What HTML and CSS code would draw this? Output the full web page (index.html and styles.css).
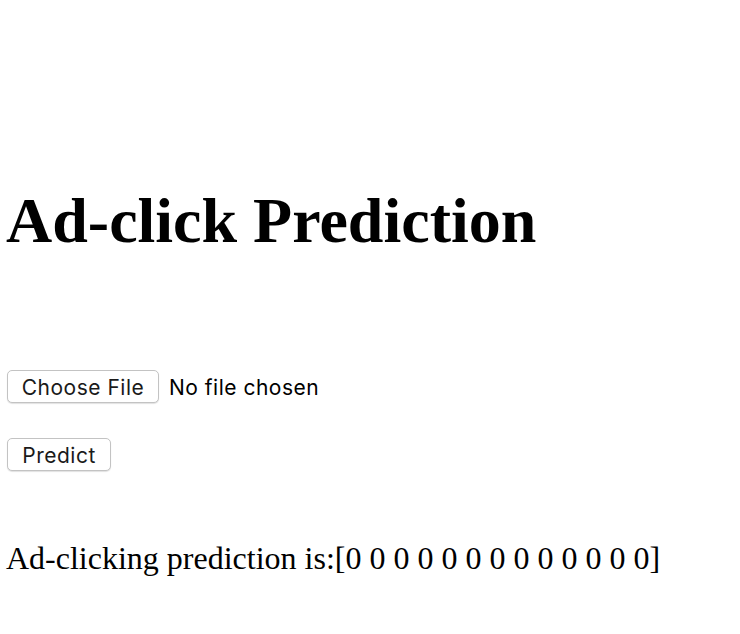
FILE: index.html
```html
<!DOCTYPE html>
<html>
<head>
<meta charset="utf-8">
<title>Ad-click Prediction</title>
<link rel="stylesheet" href="styles.css">
</head>
<body>
<div class="page">
  <h1 class="title">Ad-click Prediction</h1>
  <form class="form">
    <div class="file-row">
      <span class="btn btn-file">Choose File</span>
      <span class="file-label">No file chosen</span>
    </div>
    <div class="submit-row">
      <button type="button" class="btn btn-predict">Predict</button>
    </div>
  </form>
  <p class="result">Ad-clicking prediction is:[0 0 0 0 0 0 0 0 0 0 0 0 0]</p>
</div>
</body>
</html>
```
FILE: styles.css
```css
html, body {
  margin: 0;
  padding: 0;
  background: #ffffff;
}
.page {
  padding: 0 6px;
  font-family: "Liberation Serif", "Times New Roman", serif;
  color: #000;
}
.title {
  margin: 185px 0 0 0;
  font-size: 64px;
  font-weight: bold;
  line-height: 71px;
  height: 71px;
}
.form {
  margin: 114px 0 0 1px;
  display: flex;
  flex-direction: column;
  gap: 35px;
  font-family: Inter, "Liberation Sans", sans-serif;
}
.file-row {
  display: flex;
  align-items: center;
  gap: 10px;
}
.btn {
  box-sizing: border-box;
  display: inline-flex;
  align-items: center;
  justify-content: center;
  height: 33px;
  padding: 2px 0 0 0;
  background: #fff;
  border: 1px solid #c3c3c3;
  border-radius: 5px;
  box-shadow: 0 1px 1px rgba(0,0,0,0.12);
  font-family: Inter, "Liberation Sans", sans-serif;
  font-size: 21px;
  letter-spacing: 0.5px;
  color: #1a1a1a;
  margin: 0;
}
.btn-file {
  width: 152px;
}
.btn-predict {
  width: 104px;
  height: 33px;
}
.file-label {
  padding-top: 2px;
  font-size: 21px;
  letter-spacing: 0.5px;
  color: #000;
}
.submit-row {
  display: flex;
}
.result {
  margin: 69px 0 0 0;
  font-size: 32px;
  line-height: 36px;
}
```
